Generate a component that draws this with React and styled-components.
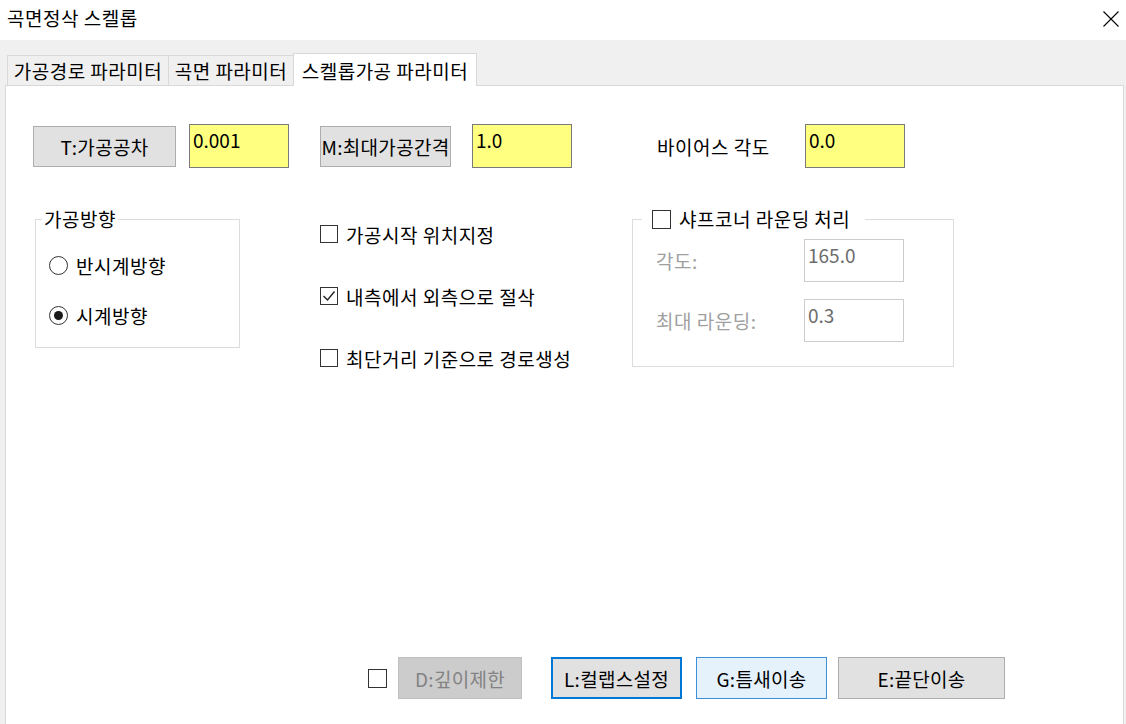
import React from 'react';
import styled, { createGlobalStyle, css } from 'styled-components';

const GlobalStyle = createGlobalStyle`
    html, body {
        margin: 0;
        padding: 0;
        width: 1126px;
        height: 724px;
        overflow: hidden;
        font-family: "Noto Sans CJK KR", "Noto Sans", "Liberation Sans", sans-serif;
        font-size: 19px;
        letter-spacing: 0.5px;
        color: #000;
    }
    * { box-sizing: border-box; }
`

const Window = styled.div`
    display: flex;
    flex-direction: column;
    width: 1126px;
    height: 724px;
    background: #fff;
`

const TitleBar = styled.div`
    display: flex;
    justify-content: space-between;
    align-items: center;
    height: 40px;
    padding: 0 7px 4px 7px;
    line-height: 24px;
    svg { margin-top: 1px; }
`

const Body = styled.div`
    flex: 1;
    display: flex;
    flex-direction: column;
    background: #f0f0f0;
    padding: 13px 2px 0 5px;
    min-height: 0;
`

const TabStrip = styled.div`
    display: flex;
    align-items: flex-end;
    height: 32px;
    padding-left: 2px;
`

const Tab = styled.div`
    display: flex;
    align-items: center;
    justify-content: center;
    width: ${p => p.$w}px;
    height: 30px;
    margin-left: -1px;
    border: 1px solid #d9d9d9;
    border-bottom: none;
    background: #f0f0f0;
    white-space: nowrap;
    ${p => p.$active && css`
        height: 33px;
        margin-bottom: -1px;
        background: #fff;
        position: relative;
        z-index: 1;
    `}
    &:first-child { margin-left: 0; }
`

const Panel = styled.div`
    flex: 1;
    display: flex;
    flex-direction: column;
    background: #fff;
    border: 1px solid #d9d9d9;
    border-bottom: none;
    padding: 38px 0 0 27px;
`

const Row = styled.div`
    display: grid;
    grid-template-columns: 287px 312px 1fr;
    align-items: ${p => p.$align || 'center'};
    margin-top: ${p => p.$top || 0}px;
`

const Cell = styled.div`
    display: flex;
    align-items: center;
    gap: ${p => p.$gap || 0}px;
    padding-left: ${p => p.$pad || 0}px;
`

const Button = styled.div`
    display: flex;
    align-items: center;
    justify-content: center;
    width: ${p => p.$w}px;
    height: ${p => p.$h || 41}px;
    background: #e1e1e1;
    border: 1px solid #adadad;
    letter-spacing: 0.3px;
    white-space: nowrap;
    margin-left: ${p => p.$ml || 0}px;
    ${p => p.$state === 'disabled' && css`
        background: #cccccc;
        border-color: #bfbfbf;
        color: #838383;
    `}
    ${p => p.$state === 'focused' && css`
        border: 2px solid #0078d7;
    `}
    ${p => p.$state === 'hover' && css`
        background: #e5f1fb;
        border-color: #3c8fd8;
    `}
`

const Edit = styled.div`
    width: 100px;
    height: ${p => p.$h || 44}px;
    padding: 2px 3px;
    line-height: 26px;
    letter-spacing: 0;
    background: #ffff80;
    border: 1px solid #7a7a7a;
    ${p => p.$disabled && css`
        background: #fff;
        border-color: #cccccc;
        color: #6d6d6d;
    `}
`

const Label = styled.span`
    width: ${p => p.$w}px;
    white-space: nowrap;
    color: ${p => (p.$disabled ? '#a0a0a0' : '#000')};
`

const Group = styled.fieldset`
    margin: 0 0 0 ${p => p.$ml || 0}px;
    width: ${p => p.$w}px;
    padding: 0 0 ${p => p.$pb}px ${p => p.$pl}px;
    border: 1px solid #dcdcdc;
    min-width: 0;
`

const Legend = styled.legend`
    display: flex;
    align-items: center;
    gap: 8px;
    height: 24px;
    line-height: 24px;
    padding: 0 ${p => p.$pr || 2}px 0 ${p => p.$plg || 2}px;
`

const OptionList = styled.div`
    display: flex;
    flex-direction: column;
    gap: ${p => p.$gap}px;
    padding-top: ${p => p.$top}px;
    padding-left: ${p => p.$left || 0}px;
`

const Option = styled.label`
    display: flex;
    align-items: center;
    height: 30px;
    gap: ${p => p.$gap || 8}px;
    white-space: nowrap;
`

const Box = styled.span`
    display: flex;
    align-items: center;
    justify-content: center;
    width: ${p => p.$size || 18}px;
    height: ${p => p.$size || 18}px;
    border: 1px solid #333;
    background: #fff;
    flex-shrink: 0;
`

const Radio = styled.span`
    display: flex;
    align-items: center;
    justify-content: center;
    width: 19px;
    height: 19px;
    border: 1px solid #333;
    border-radius: 50%;
    flex-shrink: 0;
    &::after {
        content: '';
        width: 9px;
        height: 9px;
        border-radius: 50%;
        background: #1a1a1a;
        display: ${p => (p.$on ? 'block' : 'none')};
    }
`

const FieldGrid = styled.div`
    display: grid;
    grid-template-columns: 148px 100px;
    align-items: center;
    row-gap: 17px;
    padding: 8px 0 0 14px;
`

const BottomBar = styled.div`
    display: flex;
    align-items: center;
    margin-top: auto;
    padding: 0 0 25px 335px;
`

const Check = () => (
    <svg width="14" height="12" viewBox="0 0 14 12">
        <polyline points="1.5,6 5.5,10 12.5,1.5" fill="none" stroke="#222" strokeWidth="1.4" />
    </svg>
)

const CloseIcon = () => (
    <svg width="16" height="16" viewBox="0 0 16 16">
        <path d="M0.5 0.5 L15.5 15.5 M15.5 0.5 L0.5 15.5" stroke="#000" strokeWidth="1.1" />
    </svg>
)

export default function App() {
    return (
        <Window>
            <GlobalStyle />
            <TitleBar>
                <span>곡면정삭 스켈롭</span>
                <CloseIcon />
            </TitleBar>
            <Body>
                <TabStrip>
                    <Tab $w={162}>가공경로 파라미터</Tab>
                    <Tab $w={126}>곡면 파라미터</Tab>
                    <Tab $w={184} $active>스켈롭가공 파라미터</Tab>
                </TabStrip>
                <Panel>
                    <Row>
                        <Cell $gap={13}>
                            <Button $w={143}>T:가공공차</Button>
                            <Edit>0.001</Edit>
                        </Cell>
                        <Cell $gap={21}>
                            <Button $w={131}>M:최대가공간격</Button>
                            <Edit>1.0</Edit>
                        </Cell>
                        <Cell $pad={25}>
                            <Label $w={148}>바이어스 각도</Label>
                            <Edit>0.0</Edit>
                        </Cell>
                    </Row>
                    <Row $align="start" $top={39}>
                        <Group $ml={2} $w={205} $pl={6} $pb={17}>
                            <Legend>가공방향</Legend>
                            <OptionList $top={19} $gap={20} $left={7}>
                                <Option><Radio />반시계방향</Option>
                                <Option><Radio $on />시계방향</Option>
                            </OptionList>
                        </Group>
                        <OptionList $top={12} $gap={32}>
                            <Option><Box />가공시작 위치지정</Option>
                            <Option><Box><Check /></Box>내측에서 외측으로 절삭</Option>
                            <Option><Box />최단거리 기준으로 경로생성</Option>
                        </OptionList>
                        <Group $w={322} $pl={9} $pb={24}>
                            <Legend $plg={10} $pr={15}>
                                <Box $size={19} />
                                샤프코너 라운딩 처리
                            </Legend>
                            <FieldGrid>
                                <Label $disabled>각도:</Label>
                                <Edit $disabled $h={43}>165.0</Edit>
                                <Label $disabled>최대 라운딩:</Label>
                                <Edit $disabled $h={43}>0.3</Edit>
                            </FieldGrid>
                        </Group>
                    </Row>
                    <BottomBar>
                        <Box $size={19} />
                        <Button $w={124} $h={42} $ml={11} $state="disabled">D:깊이제한</Button>
                        <Button $w={131} $h={42} $ml={29} $state="focused">L:컬랩스설정</Button>
                        <Button $w={131} $h={42} $ml={14} $state="hover">G:틈새이송</Button>
                        <Button $w={167} $h={42} $ml={11}>E:끝단이송</Button>
                    </BottomBar>
                </Panel>
            </Body>
        </Window>
    );
}
